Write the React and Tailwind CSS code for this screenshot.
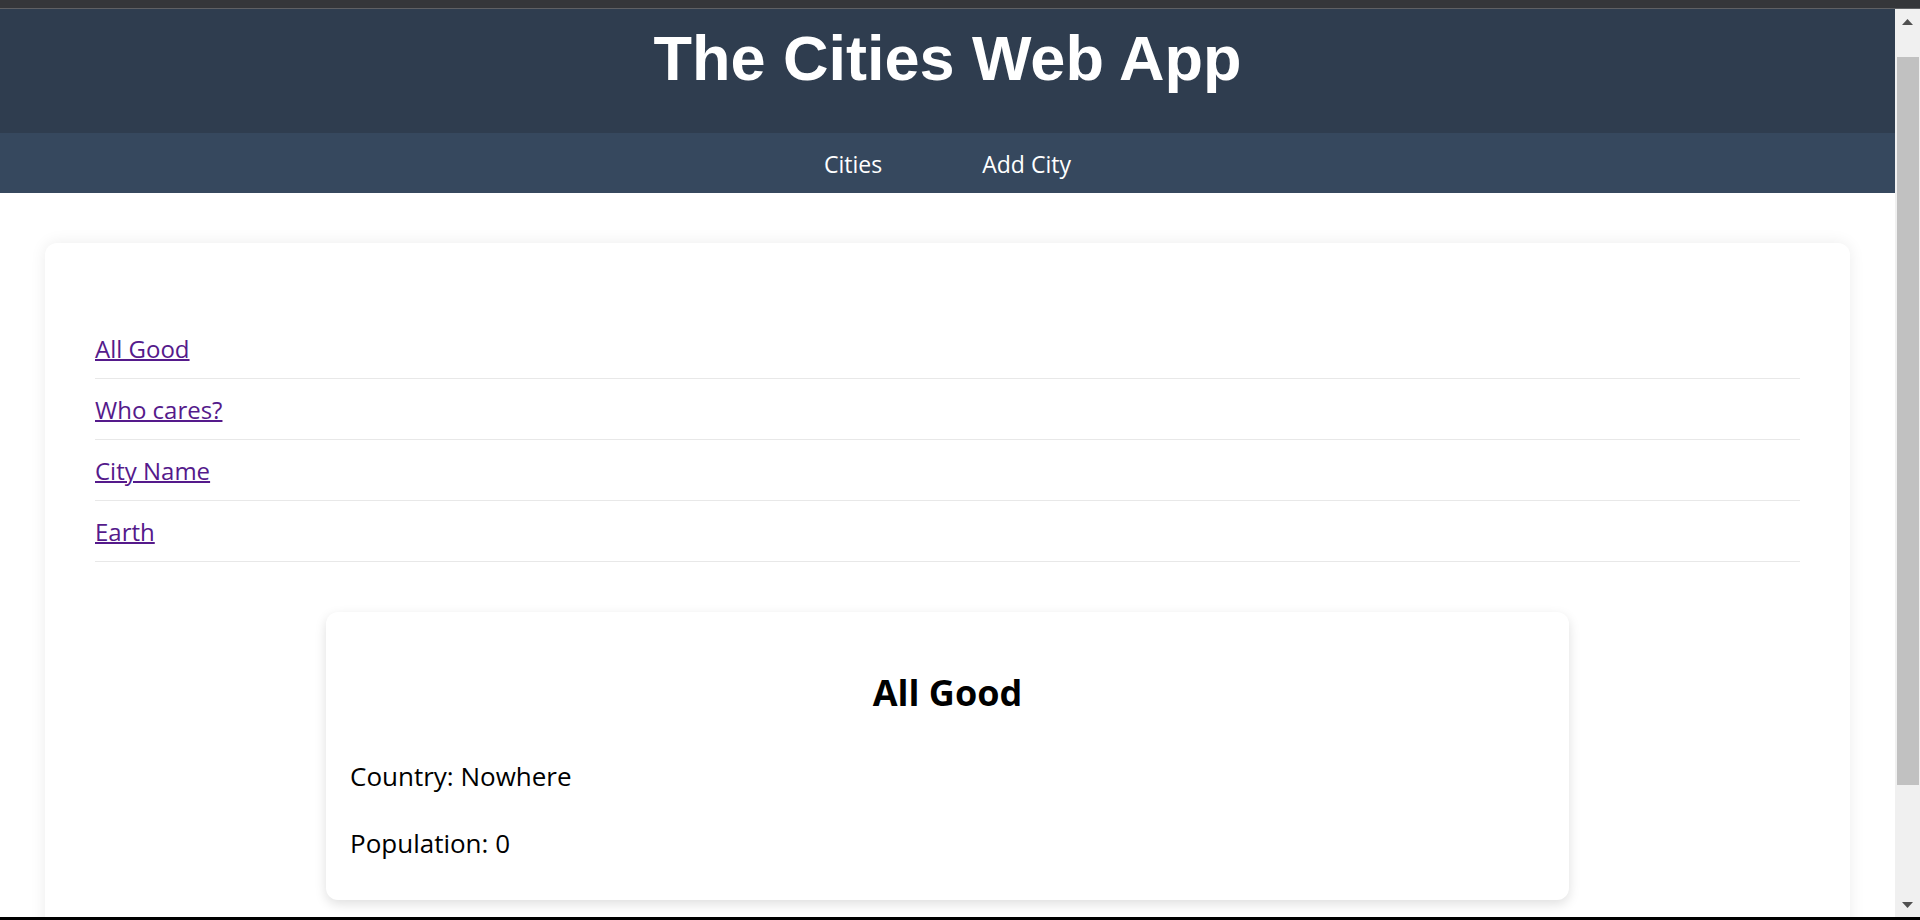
import { useEffect, useRef } from "react";

const cities = [
  { name: "All Good", country: "Nowhere", population: 0 },
  { name: "Who cares?", country: "Nowhere", population: 0 },
  { name: "City Name", country: "Country Name", population: 0 },
  { name: "Earth", country: "Earth", population: 0 },
];

function ScrollArrow({ down }) {
  return (
    <div className="h-[25px] flex items-center justify-center">
      <svg width="11" height="6" viewBox="0 0 11 6" fill="#505050">
        {down ? <path d="M0 0h11L5.5 6z" /> : <path d="M0 6h11L5.5 0z" />}
      </svg>
    </div>
  );
}

export default function App() {
  const scrollRef = useRef(null);
  const selected = cities[0];

  useEffect(() => {
    // reference is scrolled down a bit
    if (scrollRef.current) scrollRef.current.scrollTop = 29;
  }, []);

  return (
    <div className="h-screen flex flex-col bg-white font-['Open_Sans',sans-serif]">
      <div className="h-[9px] shrink-0 bg-[#35363a] border-b border-[#5f6064]" />

      <div className="flex-1 min-h-0 flex">
        <div ref={scrollRef} className="flex-1 overflow-y-scroll [scrollbar-width:none]">
          <header className="h-[153px] bg-[#2f3d4f] pt-[43px] text-center">
            <h1 className="font-['Liberation_Sans',Arial,sans-serif] text-[63px] leading-[71px] font-bold text-white">
              The Cities Web App
            </h1>
          </header>

          <nav className="h-[60px] bg-[#36485e] flex items-center justify-center gap-[100px] pt-[2px] text-[23px] text-white">
            <a href="#">Cities</a>
            <a href="#">Add City</a>
          </nav>

          <main className="mx-[45px] mt-[50px] mb-[50px] rounded-[12px] bg-white px-[50px] pt-[75px] pb-[100px] shadow-[0_0_16px_rgba(0,0,0,0.08)]">
            <ul>
              {cities.map((city) => (
                <li
                  key={city.name}
                  className="border-b border-[#e8e8e8] pt-[14px] pb-[13px] text-[24px] leading-[33px]"
                >
                  <a href="#" className="text-[#551a8b] underline decoration-2">
                    {city.name}
                  </a>
                </li>
              ))}
            </ul>

            {/* selected city */}
            <div className="mx-auto mt-[50px] w-[1243px] rounded-[12px] bg-white px-[24px] pt-[57px] pb-[39px] text-black shadow-[0_4px_12px_rgba(0,0,0,0.13)]">
              <h2 className="text-center text-[36px] leading-[48px] font-bold">
                {selected.name}
              </h2>
              <p className="mt-[42px] text-[26px] leading-[35px]">
                Country: {selected.country}
              </p>
              <p className="mt-[32px] text-[26px] leading-[35px]">
                Population: {selected.population}
              </p>
            </div>
          </main>
        </div>

        {/* window scrollbar */}
        <div className="w-[25px] shrink-0 flex flex-col bg-[#f0f0f0]">
          <ScrollArrow />
          <div className="h-[23px]" />
          <div className="h-[728px] ml-[2px] mr-[1px] bg-[#c1c1c1]" />
          <div className="flex-1" />
          <ScrollArrow down />
        </div>
      </div>

      <div className="h-[3px] shrink-0 bg-black" />
    </div>
  );
}
